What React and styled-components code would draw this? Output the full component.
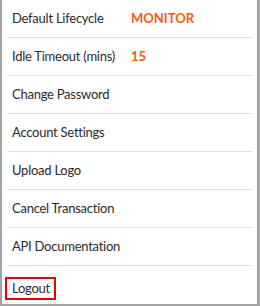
import styled, { createGlobalStyle } from "styled-components";

const GlobalStyle = createGlobalStyle`
  html, body {
    margin: 0;
    padding: 0;
    background: #ffffff;
  }
  body {
    font-family: Lato, "Open Sans", sans-serif;
  }
`;

const items = [
  { label: "Default Lifecycle", value: "MONITOR" },
  { label: "Idle Timeout (mins)", value: "15" },
  { label: "Change Password" },
  { label: "Account Settings" },
  { label: "Upload Logo" },
  { label: "Cancel Transaction" },
  { label: "API Documentation" },
];

export default function App() {
  return (
    <>
      <GlobalStyle />
      <Panel>
        <Menu>
          {items.map((item) => (
            <Row key={item.label}>
              <Label>{item.label}</Label>
              {item.value && <Value>{item.value}</Value>}
            </Row>
          ))}
          <LastRow>
            <LogoutButton>Logout</LogoutButton>
          </LastRow>
        </Menu>
      </Panel>
    </>
  );
}

const Panel = styled.div`
  box-sizing: border-box;
  width: 260px;
  height: 306px;
  background: #fff;
  border: 2px solid #a3a3a3;
  border-top: none;
  border-right-width: 3px;
`;

const Menu = styled.ul`
  list-style: none;
  margin: 0;
  padding: 0 4px 0 5px;
  display: flex;
  flex-direction: column;
`;

const Row = styled.li`
  box-sizing: border-box;
  height: 38px;
  display: grid;
  grid-template-columns: 119px 1fr;
  align-items: center;
  padding: 0 5px 1px;
  border-bottom: 1px solid #e2e2e2;
  font-size: 13px;
  letter-spacing: -0.25px;
  color: #2b2b2b;
`;

const LastRow = styled(Row)`
  border-bottom: none;
  padding-top: 7px;
`;

const Label = styled.span`
  white-space: nowrap;
`;

const Value = styled.span`
  color: #fa5a0f;
  font-weight: 700;
  letter-spacing: 0;
`;

const LogoutButton = styled.span`
  justify-self: start;
  margin-left: -7px;
  padding: 1px 4px 2px 5px;
  border: 2px solid #e8000b;
  white-space: nowrap;
`;
